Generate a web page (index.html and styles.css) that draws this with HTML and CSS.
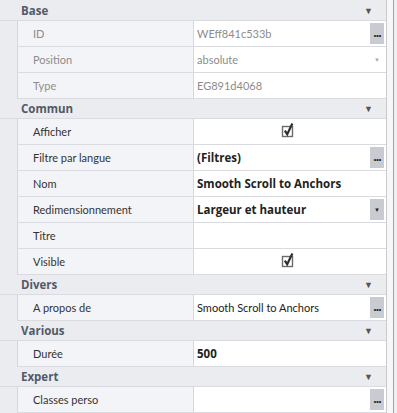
FILE: index.html
```html
<!DOCTYPE html>
<html lang="fr">
<head>
    <meta charset="UTF-8">
    <title>Propriétés</title>
    <link rel="stylesheet" href="styles.css">
</head>
<body>
    <div class="panel">
        <div class="grid">
            <div class="group">
                <div class="group-head"><span>Base</span><span class="arrow">&#9660;</span></div>
                <div class="row readonly">
                    <div class="gutter"></div>
                    <div class="label">ID</div>
                    <div class="value">WEff841c533b<span class="btn dots">&middot;&middot;&middot;</span></div>
                </div>
                <div class="row readonly">
                    <div class="gutter"></div>
                    <div class="label">Position</div>
                    <div class="value">absolute<span class="drop light">&#9660;</span></div>
                </div>
                <div class="row readonly">
                    <div class="gutter"></div>
                    <div class="label">Type</div>
                    <div class="value">EG891d4068</div>
                </div>
            </div>

            <div class="group">
                <div class="group-head"><span>Commun</span><span class="arrow">&#9660;</span></div>
                <div class="row">
                    <div class="gutter"></div>
                    <div class="label">Afficher</div>
                    <div class="value center">
                        <svg class="check" width="14" height="16" viewBox="0 0 14 16">
                            <rect x="1.5" y="4.5" width="10" height="10" fill="#fff" stroke="#6b6b6b" stroke-width="1.4"/>
                            <path d="M3.8 8.6 L6.2 12.2 L11.4 1.5" fill="none" stroke="#2e2e2e" stroke-width="2.2"/>
                        </svg>
                    </div>
                </div>
                <div class="row">
                    <div class="gutter"></div>
                    <div class="label">Filtre par langue</div>
                    <div class="value bold">(Filtres)<span class="btn dots">&middot;&middot;&middot;</span></div>
                </div>
                <div class="row">
                    <div class="gutter"></div>
                    <div class="label">Nom</div>
                    <div class="value bold">Smooth Scroll to Anchors</div>
                </div>
                <div class="row">
                    <div class="gutter"></div>
                    <div class="label">Redimensionnement</div>
                    <div class="value bold">Largeur et hauteur<span class="btn drop">&#9660;</span></div>
                </div>
                <div class="row">
                    <div class="gutter"></div>
                    <div class="label">Titre</div>
                    <div class="value"></div>
                </div>
                <div class="row">
                    <div class="gutter"></div>
                    <div class="label">Visible</div>
                    <div class="value center">
                        <svg class="check" width="14" height="16" viewBox="0 0 14 16">
                            <rect x="1.5" y="4.5" width="10" height="10" fill="#fff" stroke="#6b6b6b" stroke-width="1.4"/>
                            <path d="M3.8 8.6 L6.2 12.2 L11.4 1.5" fill="none" stroke="#2e2e2e" stroke-width="2.2"/>
                        </svg>
                    </div>
                </div>
            </div>

            <div class="group">
                <div class="group-head"><span>Divers</span><span class="arrow">&#9660;</span></div>
                <div class="row">
                    <div class="gutter"></div>
                    <div class="label">A propos de</div>
                    <div class="value">Smooth Scroll to Anchors<span class="btn dots">&middot;&middot;&middot;</span></div>
                </div>
            </div>

            <div class="group">
                <div class="group-head"><span>Various</span><span class="arrow">&#9660;</span></div>
                <div class="row">
                    <div class="gutter"></div>
                    <div class="label">Durée</div>
                    <div class="value bold">500</div>
                </div>
            </div>

            <div class="group">
                <div class="group-head"><span>Expert</span><span class="arrow">&#9660;</span></div>
                <div class="row">
                    <div class="gutter"></div>
                    <div class="label">Classes perso</div>
                    <div class="value"><span class="btn dots">&middot;&middot;&middot;</span></div>
                </div>
            </div>
        </div>
        <div class="scroll"></div>
    </div>
</body>
</html>
```

FILE: styles.css
```css
body {
    margin: 0;
    background-color: #f4f4f6;
    font-family: Lato, 'Open Sans', sans-serif;
    font-size: 11px;
    color: #333;
}

.panel {
    display: flex;
    height: 413px;
    overflow: hidden;
}

.grid {
    width: 386px;
    background-color: #ebecf0;
    border-right: 1px solid #c9cace;
}

.group-head {
    display: flex;
    justify-content: space-between;
    align-items: center;
    height: 19px;
    padding: 0 13px 0 21px;
    border-bottom: 1px solid #dadbe0;
    font-family: 'Open Sans', sans-serif;
    font-size: 11.5px;
    font-weight: bold;
    color: #525a68;
}

.group:first-child .group-head {
    height: 20px;
}

.arrow {
    font-size: 9px;
    color: #555;
}

.row {
    display: flex;
    height: 25px;
    border-bottom: 1px solid #dadbe0;
}

.gutter {
    width: 17px;
    flex: none;
    background-color: #ebecf0;
    margin-bottom: -1px;
}

.label {
    width: 160px;
    flex: none;
    padding-left: 15px;
    display: flex;
    align-items: center;
    background-color: #f3f4f7;
    border-left: 1px solid #d6d7dc;
    border-right: 1px solid #d6d7dc;
}

.value {
    flex: 1;
    display: flex;
    align-items: center;
    padding-left: 3px;
    position: relative;
    background-color: #fff;
    color: #222;
}

.readonly .label,
.readonly .value {
    color: #8c8c8c;
}

.bold {
    font-family: 'Open Sans', sans-serif;
    font-size: 11.5px;
    font-weight: bold;
}

.center {
    justify-content: center;
    padding-left: 0;
    padding-right: 4px;
}

.check {
    margin-top: -4px;
}

.btn {
    position: absolute;
    right: 2px;
    top: 2px;
    width: 14px;
    height: 21px;
    background-color: #c8cbd2;
    color: #222;
    display: flex;
    align-items: center;
    justify-content: center;
}

.dots {
    font-family: 'Open Sans', sans-serif;
    font-weight: bold;
    font-size: 12px;
    letter-spacing: -1px;
    padding-top: 3px;
    box-sizing: border-box;
}

.drop {
    font-size: 6px;
}

.drop.light {
    position: absolute;
    right: 6px;
    color: #aaa;
}

.scroll {
    flex: 1;
    background-color: #f7f7f7;
    border-right: 3px solid #efeff2;
    box-shadow: inset -1px 0 0 #b7a27e;
}
```
